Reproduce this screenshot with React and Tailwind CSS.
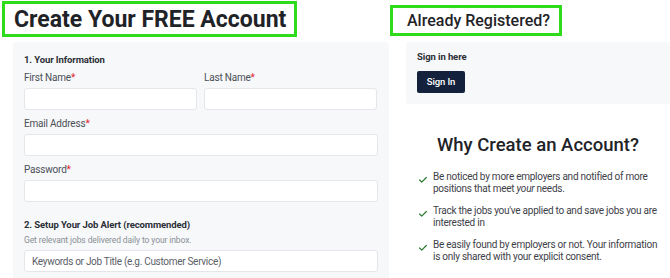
import { Check } from "lucide-react";

function Field({ label, className = "" }) {
  return (
    <div className={className}>
      <div className="text-[10px] leading-[13px] tracking-[-0.2px] text-[#4b4f56]">
        {label}
        <span className="text-[#e3262f]">*</span>
      </div>
      <div className="mt-[4px] h-[22px] rounded-[3px] border border-[#e4e6ea] bg-white" />
    </div>
  );
}

const reasons = [
  <>Be noticed by more employers and notified of more positions that meet <i>your</i> needs.</>,
  <>Track the jobs you've applied to and save jobs you are interested in</>,
  <>Be easily found by employers or not. Your information is only shared with your explicit consent.</>,
];

export default function App() {
  return (
    <div className="flex h-[278px] w-[670px] overflow-hidden bg-white font-['Roboto',sans-serif] text-[#2b2f36]">
      <div className="w-[390px] shrink-0">
        <div className="ml-[2px] mt-[1px] flex h-[36px] w-[295px] items-center border-[3px] border-[#2fdc1c] pl-[9px]">
          <h1 className="whitespace-nowrap text-[23px] font-bold leading-none text-[#1f2328]">
            Create Your FREE Account
          </h1>
        </div>
        <div className="ml-[13px] mt-[5px] h-[260px] w-[376px] rounded-[3px] bg-[#f7f8fa] px-[11px] pt-[11px]">
          <div className="text-[9.5px] font-bold leading-[13px] tracking-[-0.1px] text-[#2b2f36]">1. Your Information</div>
          <div className="mt-[5px] flex gap-[7px]">
            <Field label="First Name" className="w-[173px]" />
            <Field label="Last Name" className="w-[173px]" />
          </div>
          <Field label="Email Address" className="mt-[7px]" />
          <Field label="Password" className="mt-[7px]" />
          <div className="mt-[16px] text-[9.5px] font-bold leading-[13px] tracking-[-0.1px] text-[#2b2f36]">
            2. Setup Your Job Alert (recommended)
          </div>
          <div className="mt-[3px] text-[8.5px] leading-[12px] tracking-[-0.1px] text-[#8a8f96]">
            Get relevant jobs delivered daily to your inbox.
          </div>
          <div className="mt-[4px] flex h-[22px] items-center rounded-[3px] border border-[#e4e6ea] bg-white pl-[7px] text-[10px] tracking-[-0.3px] text-[#5b6068]">
            Keywords or Job Title (e.g. Customer Service)
          </div>
        </div>
      </div>

      <div className="flex-1">
        <div className="mt-[5px] flex h-[31px] w-[172px] items-center border-[3px] border-[#2fdc1c] pl-[14px]">
          <h2 className="whitespace-nowrap text-[16px] font-medium leading-none text-[#1f2328]">Already Registered?</h2>
        </div>
        <div className="ml-[16px] mt-[6px] h-[62px] rounded-[3px] bg-[#f7f8fa] pl-[11px] pt-[9px]">
          <div className="text-[9.5px] font-bold leading-[12px] tracking-[-0.1px] text-[#2b2f36]">Sign in here</div>
          <button className="mt-[8px] flex h-[22px] w-[48px] items-center justify-center rounded-[2px] bg-[#14213d] text-[9.5px] font-medium tracking-[-0.1px] text-white">
            Sign In
          </button>
        </div>
        <h3 className="ml-[16px] mt-[30px] text-center text-[18.5px] font-medium leading-[22px] text-[#1f2328]">
          Why Create an Account?
        </h3>
        <ul className="ml-[28px] mt-[15px] flex w-[240px] flex-col gap-[10px]">
          {reasons.map((r, i) => (
            <li key={i} className="flex gap-[5px] text-[10px] leading-[12px] tracking-[-0.25px] text-[#3d4148]">
              <Check className="mt-[4px] h-[10px] w-[10px] shrink-0 text-[#2e7d32]" strokeWidth={3} />
              <span>{r}</span>
            </li>
          ))}
        </ul>
      </div>
    </div>
  );
}
